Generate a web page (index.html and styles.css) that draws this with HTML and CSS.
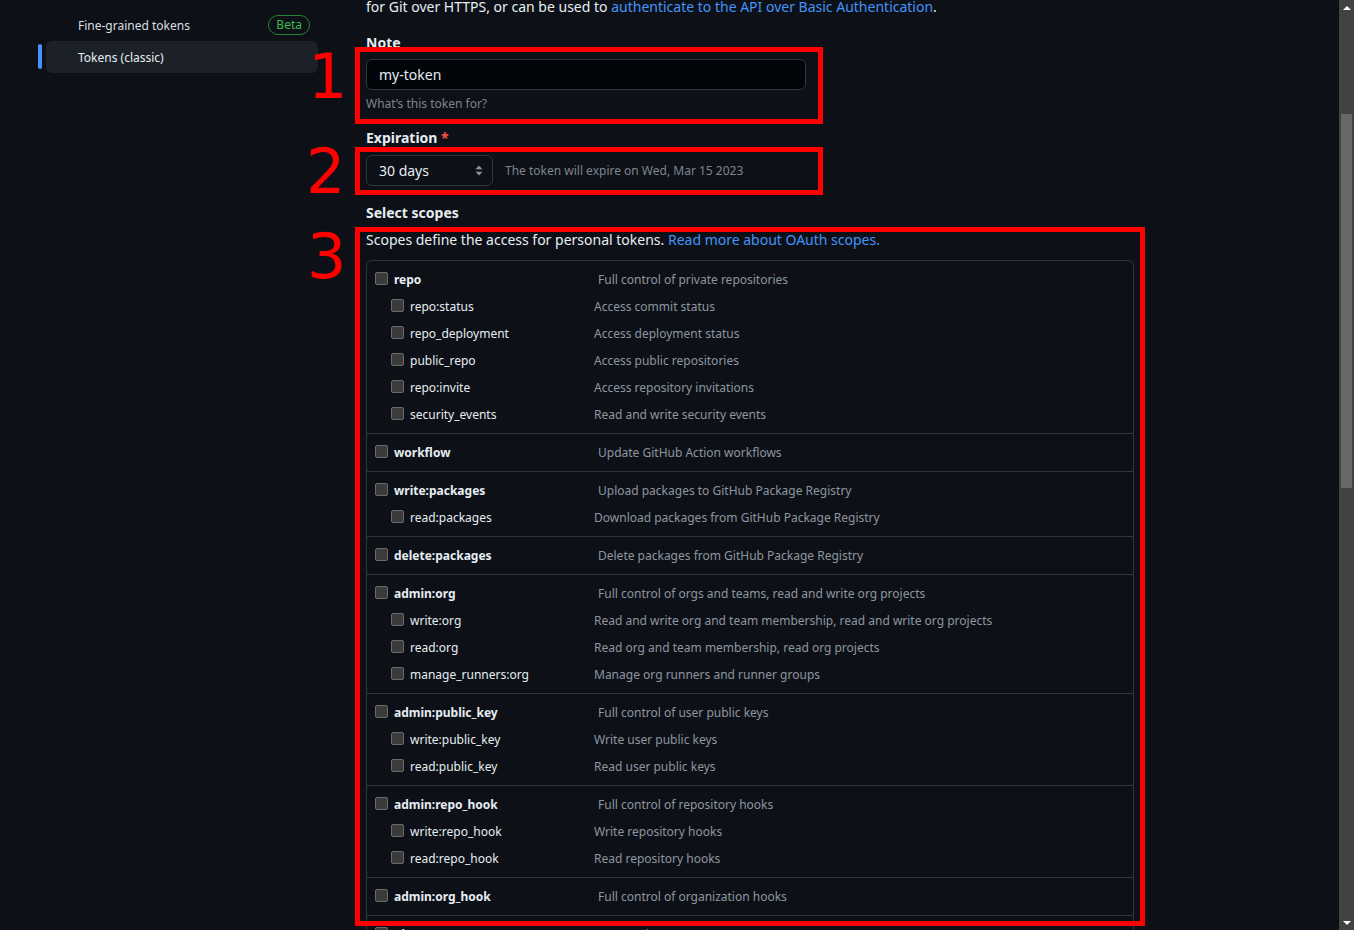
FILE: index.html
```html
<!DOCTYPE html>
<html lang="en">
<head>
<meta charset="utf-8">
<title>New personal access token (classic)</title>
<link rel="stylesheet" href="styles.css">
</head>
<body>
<div class="window">
  <div class="viewport">
    <div class="page">
      <nav class="sidebar">
        <a class="nav-item">
          <span class="nav-label">Fine-grained tokens</span>
          <span class="badge">Beta</span>
        </a>
        <a class="nav-item active">
          <span class="nav-label">Tokens (classic)</span>
        </a>
      </nav>

      <main class="main">
        <p class="intro">for Git over HTTPS, or can be used to <a class="link">authenticate to the API over Basic Authentication</a>.</p>

        <div class="field note-field">
          <label class="field-label">Note</label>
          <div class="input">my-token</div>
          <p class="hint">What’s this token for?</p>
        </div>

        <div class="field exp-field">
          <label class="field-label">Expiration <span class="req">*</span></label>
          <div class="exp-row">
            <div class="select">
              <span>30 days</span>
              <svg class="select-caret" width="8" height="11" viewBox="0 0 8 11"><path d="M4 0.5 L7.5 4.2 H0.5 Z M4 10.5 L0.5 6.8 H7.5 Z" fill="#8b949e"/></svg>
            </div>
            <span class="exp-note">The token will expire on Wed, Mar 15 2023</span>
          </div>
        </div>

        <div class="field scopes-field">
          <label class="field-label">Select scopes</label>
          <p class="scopes-desc">Scopes define the access for personal tokens. <a class="link">Read more about OAuth scopes.</a></p>

          <div class="scope-box">
            <div class="group">
              <div class="row parent"><span class="cb"></span><span class="name">repo</span><span class="desc">Full control of private repositories</span></div>
              <div class="row child"><span class="cb"></span><span class="name">repo:status</span><span class="desc">Access commit status</span></div>
              <div class="row child"><span class="cb"></span><span class="name">repo_deployment</span><span class="desc">Access deployment status</span></div>
              <div class="row child"><span class="cb"></span><span class="name">public_repo</span><span class="desc">Access public repositories</span></div>
              <div class="row child"><span class="cb"></span><span class="name">repo:invite</span><span class="desc">Access repository invitations</span></div>
              <div class="row child"><span class="cb"></span><span class="name">security_events</span><span class="desc">Read and write security events</span></div>
            </div>
            <div class="group">
              <div class="row parent"><span class="cb"></span><span class="name">workflow</span><span class="desc">Update GitHub Action workflows</span></div>
            </div>
            <div class="group">
              <div class="row parent"><span class="cb"></span><span class="name">write:packages</span><span class="desc">Upload packages to GitHub Package Registry</span></div>
              <div class="row child"><span class="cb"></span><span class="name">read:packages</span><span class="desc">Download packages from GitHub Package Registry</span></div>
            </div>
            <div class="group">
              <div class="row parent"><span class="cb"></span><span class="name">delete:packages</span><span class="desc">Delete packages from GitHub Package Registry</span></div>
            </div>
            <div class="group">
              <div class="row parent"><span class="cb"></span><span class="name">admin:org</span><span class="desc">Full control of orgs and teams, read and write org projects</span></div>
              <div class="row child"><span class="cb"></span><span class="name">write:org</span><span class="desc">Read and write org and team membership, read and write org projects</span></div>
              <div class="row child"><span class="cb"></span><span class="name">read:org</span><span class="desc">Read org and team membership, read org projects</span></div>
              <div class="row child"><span class="cb"></span><span class="name">manage_runners:org</span><span class="desc">Manage org runners and runner groups</span></div>
            </div>
            <div class="group">
              <div class="row parent"><span class="cb"></span><span class="name">admin:public_key</span><span class="desc">Full control of user public keys</span></div>
              <div class="row child"><span class="cb"></span><span class="name">write:public_key</span><span class="desc">Write user public keys</span></div>
              <div class="row child"><span class="cb"></span><span class="name">read:public_key</span><span class="desc">Read user public keys</span></div>
            </div>
            <div class="group">
              <div class="row parent"><span class="cb"></span><span class="name">admin:repo_hook</span><span class="desc">Full control of repository hooks</span></div>
              <div class="row child"><span class="cb"></span><span class="name">write:repo_hook</span><span class="desc">Write repository hooks</span></div>
              <div class="row child"><span class="cb"></span><span class="name">read:repo_hook</span><span class="desc">Read repository hooks</span></div>
            </div>
            <div class="group">
              <div class="row parent"><span class="cb"></span><span class="name">admin:org_hook</span><span class="desc">Full control of organization hooks</span></div>
            </div>
            <div class="group">
              <div class="row parent"><span class="cb"></span><span class="name">gist</span><span class="desc">Create gists</span></div>
            </div>
          </div>
        </div>
      </main>
    </div>

    <div class="annot box1"></div>
    <div class="annot box2"></div>
    <div class="annot box3"></div>
    <div class="annot-num num1">1</div>
    <div class="annot-num num2">2</div>
    <div class="annot-num num3">3</div>
  </div>

  <div class="scrollbar">
    <div class="sb-arrow up"></div>
    <div class="sb-track">
      <div class="sb-thumb"></div>
    </div>
    <div class="sb-arrow down"></div>
  </div>
</div>
</body>
</html>
```

FILE: styles.css
```css
* { box-sizing: border-box; }

html, body {
  margin: 0;
  padding: 0;
  height: 930px;
  overflow: hidden;
  background: #0d1117;
  color: #e6edf3;
  font-family: "Noto Sans", "Liberation Sans", sans-serif;
  font-size: 14px;
}

p { margin: 0; }

.window {
  display: flex;
  height: 930px;
}

.viewport {
  flex: 1;
  position: relative;
  overflow: hidden;
}

.page {
  display: flex;
  padding-left: 38px;
  margin-top: -4px;
}

/* Sidebar */
.sidebar {
  width: 280px;
  flex-shrink: 0;
  padding-top: 13px;
  display: flex;
  flex-direction: column;
}

.nav-item {
  position: relative;
  margin-left: 8px;
  height: 32px;
  display: flex;
  align-items: center;
  justify-content: space-between;
  padding-left: 32px;
  padding-right: 8px;
  border-radius: 6px;
  font-size: 12px;
  color: #d9dee4;
}

.nav-item.active {
  background: #1c2128;
  color: #e6edf3;
}

.nav-item.active::before {
  content: "";
  position: absolute;
  left: -8px;
  top: 3px;
  width: 4px;
  height: 25px;
  border-radius: 3px;
  background: #4493f8;
}

.badge {
  height: 20px;
  line-height: 18px;
  padding: 0 7px;
  border: 1px solid #238636;
  border-radius: 2em;
  color: #3fb950;
  font-size: 12px;
}

/* Main */
.main {
  width: 768px;
  margin-left: 48px;
  flex-shrink: 0;
}

.intro {
  line-height: 21px;
  color: #e6edf3;
}

.link {
  color: #4493f8;
  text-decoration: none;
}

.field-label {
  display: block;
  font-weight: 700;
  line-height: 20px;
  color: #e6edf3;
}

.note-field { margin-top: 16px; }

.input {
  margin-top: 6px;
  width: 440px;
  height: 31px;
  padding: 0 12px;
  display: flex;
  align-items: center;
  background: #010409;
  border: 1px solid #30363d;
  border-radius: 6px;
  font-size: 14px;
  color: #e6edf3;
}

.hint {
  margin-top: 5px;
  font-size: 12px;
  line-height: 18px;
  color: #7d8590;
}

.exp-field { margin-top: 15px; }

.req { color: #f85149; }

.exp-row {
  margin-top: 7px;
  display: flex;
  align-items: center;
  gap: 12px;
}

.select {
  width: 127px;
  height: 31px;
  padding: 0 9px 0 12px;
  display: flex;
  align-items: center;
  justify-content: space-between;
  background: #0d1117;
  border: 1px solid #30363d;
  border-radius: 6px;
  font-size: 14px;
  color: #e6edf3;
}

.exp-note {
  font-size: 12px;
  color: #7d8590;
}

.scopes-field { margin-top: 17px; }

.scopes-desc {
  margin-top: 6px;
  line-height: 21px;
}

.scope-box {
  margin-top: 10px;
  border: 1px solid #30363d;
  border-radius: 6px;
  font-size: 12px;
}

.group {
  padding: 5px 8px;
}

.group + .group {
  border-top: 1px solid #30363d;
}

.row {
  display: flex;
  align-items: center;
  height: 27px;
}

.row.child { padding-left: 16px; }

.cb {
  width: 13px;
  height: 13px;
  flex-shrink: 0;
  margin-right: 6px;
  margin-bottom: 3px;
  border: 1px solid #6b6b6b;
  border-radius: 2px;
  background: #3b3b3b;
}

.name {
  width: 204px;
  flex-shrink: 0;
  color: #e6edf3;
}

.parent .name { font-weight: 700; }

.child .name { width: 184px; }

.desc { color: #8d96a0; }

/* Annotations (overlay) */
.annot {
  position: absolute;
  border: 5px solid #ff0000;
}

.box1 { left: 355px; top: 47px; width: 468px; height: 77px; }
.box2 { left: 355px; top: 147px; width: 468px; height: 48px; }
.box3 { left: 355px; top: 227px; width: 790px; height: 699px; }

.annot-num {
  position: absolute;
  font-family: "DejaVu Sans", sans-serif;
  font-size: 62px;
  line-height: 1;
  color: #ff0000;
}

.num1 { left: 308px; top: 46px; }
.num2 { left: 306px; top: 141px; }
.num3 { left: 307px; top: 226px; }

/* Scrollbar */
.scrollbar {
  width: 15px;
  flex-shrink: 0;
  background: #424242;
  display: flex;
  flex-direction: column;
}

.sb-arrow {
  height: 15px;
  display: flex;
  align-items: center;
  justify-content: center;
}

.sb-arrow::before {
  content: "";
  width: 0;
  height: 0;
  border-left: 4px solid transparent;
  border-right: 4px solid transparent;
}

.sb-arrow.up::before { border-bottom: 4px solid #ffffff; }
.sb-arrow.down::before { border-top: 4px solid #ffffff; }

.sb-track {
  flex: 1;
  padding: 99px 2px 0 2px;
}

.sb-thumb {
  height: 374px;
  background: #686868;
}
```
